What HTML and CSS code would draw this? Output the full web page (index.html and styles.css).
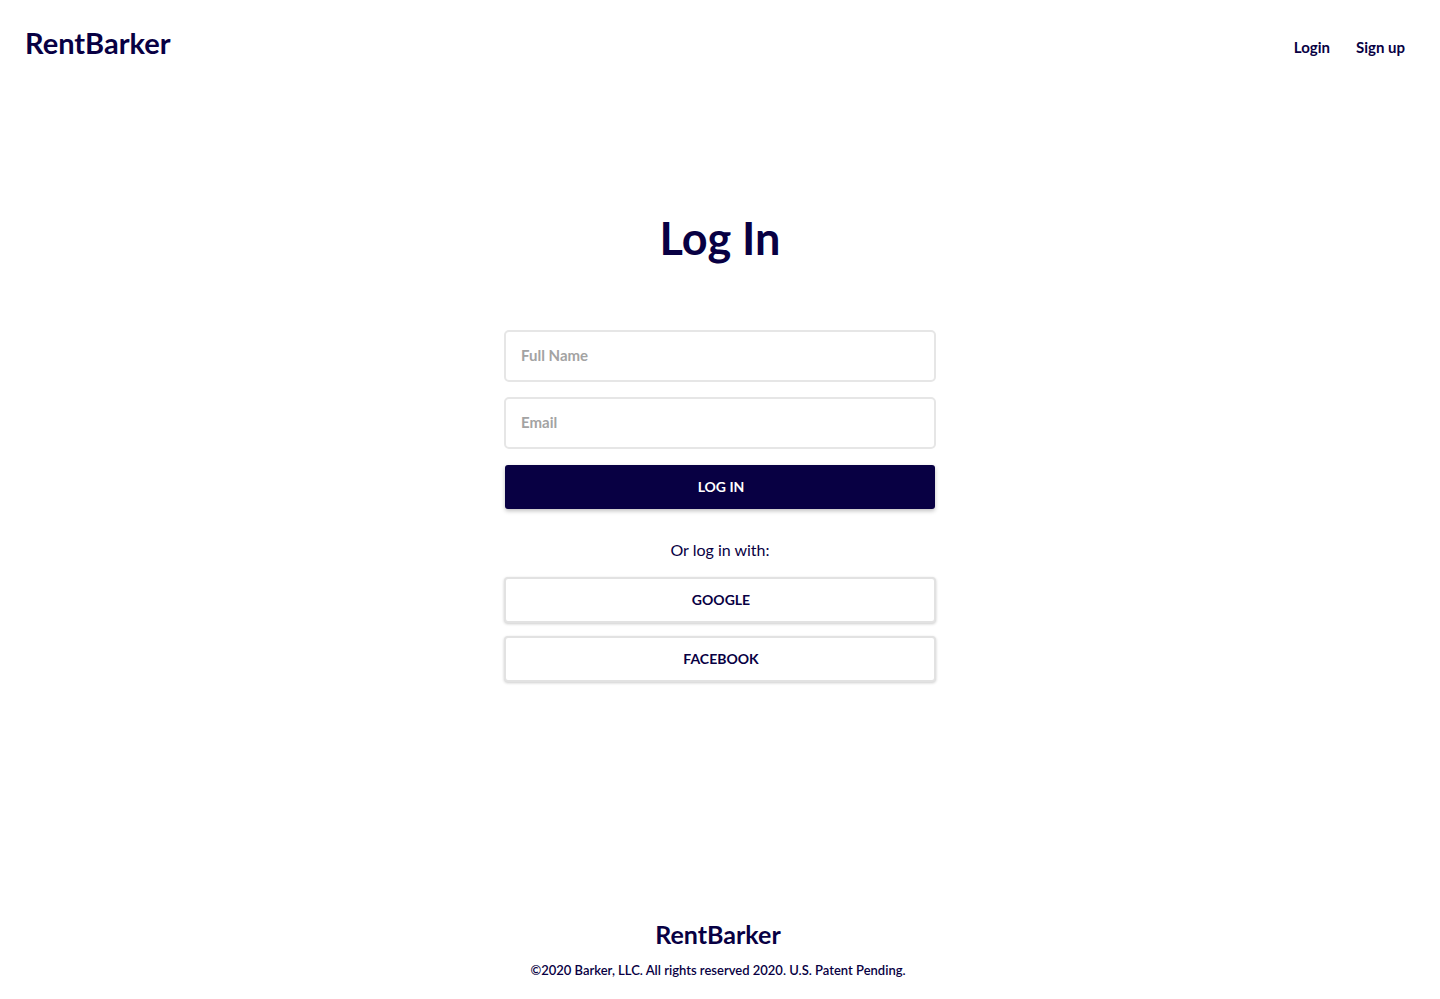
FILE: index.html
```html
<!DOCTYPE html>
<html lang="en">
<head>
<meta charset="utf-8">
<meta name="viewport" content="width=device-width, initial-scale=1">
<title>Log In – RentBarker</title>
<link rel="stylesheet" href="styles.css">
</head>
<body>
<header class="header">
  <a class="brand" href="#">RentBarker</a>
  <nav class="nav">
    <a class="nav-link" href="#login">Login</a>
    <a class="nav-link" href="#signup">Sign up</a>
  </nav>
</header>
<main class="main">
  <h1 class="title">Log In</h1>
  <form class="form">
    <input class="field" type="text" name="name" placeholder="Full Name" aria-label="Full Name">
    <input class="field" type="email" name="email" placeholder="Email" aria-label="Email">
    <button class="button button-primary" type="submit">LOG IN</button>
    <p class="alternative">Or log in with:</p>
    <div class="providers">
      <button class="button button-outline" type="button">GOOGLE</button>
      <button class="button button-outline" type="button">FACEBOOK</button>
    </div>
  </form>
</main>
<footer class="footer">
  <a class="footer-brand" href="#">RentBarker</a>
  <p class="copyright">©2020 Barker, LLC. All rights reserved 2020. U.S. Patent Pending.</p>
</footer>
</body>
</html>
```
FILE: styles.css
```css
* { box-sizing: border-box; }
body {
  display: flex;
  flex-direction: column;
  min-height: 100vh;
  margin: 0;
  background: #fff;
  color: #080043;
  font-family: Lato, "Open Sans", sans-serif;
}
a { color: inherit; text-decoration: none; }
.header {
  display: flex;
  align-items: center;
  justify-content: space-between;
  padding: 23px 35px 25px 25px;
}
.brand { font-size: 29px; line-height: 40px; font-weight: 700; }
.nav { display: flex; gap: 26px; padding-top: 7px; }
.nav-link { font-size: 15px; line-height: 20px; font-weight: 700; }
.main {
  flex: 1;
  width: 100%;
  max-width: 464px;
  margin: 0 auto;
  padding: 118px 16px 48px;
}
.title {
  margin: 0 0 60px;
  font-size: 45px;
  line-height: 64px;
  font-weight: 700;
  text-align: center;
}
.form { display: flex; flex-direction: column; }
.field {
  width: 100%;
  height: 52px;
  margin: 0 0 15px;
  padding: 0 15px 2px;
  border: 2px solid #e6e6e6;
  border-radius: 5px;
  background: #fff;
  color: #080043;
  font: 700 15px/20px Lato, "Open Sans", sans-serif;
}
.field::placeholder { color: #a3a3a3; opacity: 1; }
.button {
  padding: 1px 5px 1px 7px;
  border-radius: 4px;
  font: 700 14px/20px Lato, "Open Sans", sans-serif;
  cursor: pointer;
}
.button-primary {
  height: 44px;
  margin: 1px;
  border: 0;
  border-radius: 3px;
  background: #080043;
  color: #fff;
  box-shadow: 0 2px 4px rgba(0, 0, 0, 0.25);
}
.alternative {
  margin: 28px 0 15px;
  font-size: 16px;
  line-height: 24px;
  text-align: center;
}
.providers { display: grid; gap: 13px; }
.button-outline {
  height: 46px;
  border: 2px solid #e2e2e2;
  background: #fff;
  color: #080043;
  box-shadow: 0 1px 3px rgba(0, 0, 0, 0.2);
}
.footer { padding: 0 20px 19px 16px; text-align: center; }
.footer-brand { font-size: 25px; line-height: 32px; font-weight: 700; }
.copyright { margin: 10px 0 0; font-size: 13px; line-height: 20px; font-weight: 600; }
```
